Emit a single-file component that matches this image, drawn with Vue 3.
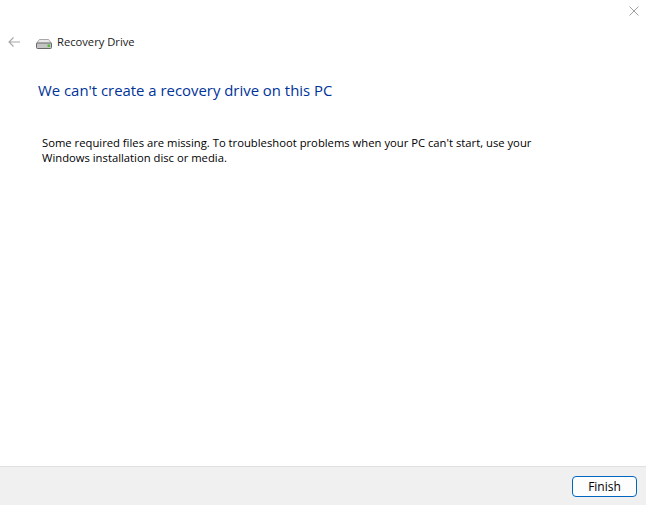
<script setup>
</script>
<template>
  <div class="win">
    <button class="close" aria-label="Close">
      <svg width="10" height="10" viewBox="0 0 10 10"><path d="M.5.5l9 9M9.5.5l-9 9" stroke="#a0a0a0" fill="none"/></svg>
    </button>
    <main class="main">
      <header class="nav">
        <svg class="back" width="12" height="10" viewBox="0 0 12 10"><path d="M12 5H1M5.5.5 1 5l4.5 4.5" stroke="#a6a6a6" stroke-width="1.1" fill="none"/></svg>
        <svg class="drive" width="16" height="10" viewBox="0 0 16 10">
          <path d="M2.5 1.5Q3 .5 4 .5h8q1 0 1.5 1L15.5 4.5H.5z" fill="#e8e8e8" stroke="#a8a8a8"/>
          <rect x=".5" y="4" width="15" height="5.5" rx="1" fill="#c4c4c4" stroke="#666"/>
          <rect x="11.5" y="5.5" width="2.5" height="2.5" fill="#4fbf3a"/>
        </svg>
        <span class="crumb">Recovery Drive</span>
      </header>
      <h1 class="title">We can't create a recovery drive on this PC</h1>
      <p class="msg">Some required files are missing. To troubleshoot problems when your PC can't start, use your<br>Windows installation disc or media.</p>
    </main>
    <footer class="foot"><button class="finish">Finish</button></footer>
  </div>
</template>
<style scoped>
.win { width: 646px; height: 505px; display: flex; flex-direction: column; background: #fff; font-family: "Open Sans", sans-serif; position: relative; overflow: hidden; }
.close { position: absolute; top: 6px; left: 629px; width: 10px; height: 10px; padding: 0; border: 0; background: none; display: block; line-height: 0; }
.main { flex: 1; padding: 35px 0 0 8px; }
.nav { display: flex; align-items: center; height: 14px; }
.back { margin-right: 16px; }
.drive { margin-right: 5px; margin-top: 3px; }
.crumb { font-size: 11.2px; color: #1a1a1a; line-height: 14px; }
.title { margin: 31px 0 0 30px; font-size: 14.9px; font-weight: 400; color: #003399; line-height: 20px; }
.msg { margin: 35px 0 0 34px; font-size: 11.25px; line-height: 15px; color: #000; white-space: nowrap; }
.foot { height: 39px; background: #f0f0f0; border-top: 1px solid #dfdfdf; display: flex; justify-content: flex-end; align-items: center; padding: 1px 9px 0 0; box-sizing: border-box; }
.finish { width: 65px; height: 21px; box-sizing: border-box; border: 1.5px solid #0067c0; border-radius: 4px; background: #fdfdfd; font: 12px "Open Sans", sans-serif; color: #000; padding: 0; }
</style>
